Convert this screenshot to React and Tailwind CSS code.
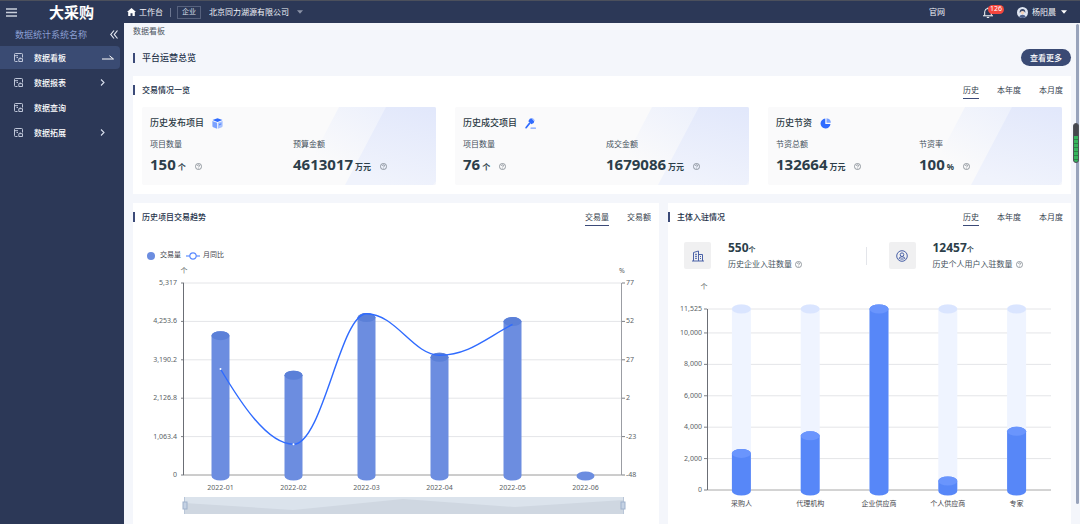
import React, { useState } from "react"

const MENU = [
  { label: "数据看板", active: true },
  { label: "数据报表", expandable: true },
  { label: "数据查询" },
  { label: "数据拓展", expandable: true },
]

const STATS = [
  {
    title: "历史发布项目",
    icon: "box",
    items: [
      { label: "项目数量", value: "150", unit: "个" },
      { label: "预算金额", value: "4613017", unit: "万元" },
    ],
  },
  {
    title: "历史成交项目",
    icon: "hammer",
    items: [
      { label: "项目数量", value: "76", unit: "个" },
      { label: "成交金额", value: "1679086", unit: "万元" },
    ],
  },
  {
    title: "历史节资",
    icon: "pie",
    items: [
      { label: "节资总额", value: "132664", unit: "万元" },
      { label: "节资率", value: "100", unit: "%" },
    ],
  },
]

const TREND = [
  { month: "2022-01", count: 3859, rate: 21 },
  { month: "2022-02", count: 2763, rate: -28 },
  { month: "2022-03", count: 4359, rate: 57 },
  { month: "2022-04", count: 3262, rate: 30 },
  { month: "2022-05", count: 4248, rate: 50 },
  { month: "2022-06", count: 0, rate: null },
]

const TREND_AXIS = [
  { left: "5,317", right: "77" },
  { left: "4,253.6", right: "52" },
  { left: "3,190.2", right: "27" },
  { left: "2,126.8", right: "2" },
  { left: "1,063.4", right: "-23" },
  { left: "0", right: "-48" },
]

const MEMBERS = [
  { name: "采购人", count: 2330 },
  { name: "代理机构", count: 3448 },
  { name: "企业供应商", count: 11525 },
  { name: "个人供应商", count: 575 },
  { name: "专家", count: 3735 },
]

const MEMBER_TICKS = [11525, 10000, 8000, 6000, 4000, 2000, 0]

const PERIODS = ["历史", "本年度", "本月度"]

function StatIcon({ type }) {
  if (type === "box") {
    return (
      <svg viewBox="0 0 22 22" className="size-[11px]">
        <path d="M11 0.5 21 4.2 11 8 1 4.2Z" fill="#2f6bff" />
        <path d="M0.8 6 10.2 9.4V21.4L2.4 18.4Q0.8 17.6 0.8 16Z" fill="#7ba2ff" />
        <path d="M21.2 6 11.8 9.4V21.4L19.6 18.4Q21.2 17.6 21.2 16Z" fill="#a5c0ff" />
        <path d="M14 12.2 18.6 10.4V13L14 14.8Z" fill="#5b8bff" />
      </svg>
    )
  }
  if (type === "hammer") {
    return (
      <svg viewBox="0 0 22 22" className="size-[11px]">
        <path d="M9.6 1.6 13 0.6 18.4 6.4 17.4 10 12.6 12.6 6.6 6.4Z" fill="#2f6bff" />
        <path d="M8.6 8.4 11 10.8 3.4 20.4Q1.8 21.6 0.8 20.4 0 19.2 1.2 18Z" fill="#2f6bff" />
        <path d="M13.4 0.6 15.4 0 19.6 4.4 18.6 6.6Z" fill="#9dbaff" />
        <rect x="11" y="19" width="11" height="2.4" rx="1" fill="#7ba2ff" />
      </svg>
    )
  }
  return (
    <svg viewBox="0 0 22 22" className="size-[11px]">
      <path d="M10.6 1.2A10 10 0 1 0 21 12H10.6Z" fill="#2f6bff" />
      <path d="M13 0.4A9.4 9.4 0 0 1 21.8 9.4H13Z" fill="#7ba2ff" />
    </svg>
  )
}

function HelpIcon() {
  return (
    <svg viewBox="0 0 16 16" className="size-[7px] shrink-0" fill="none" stroke="#5c6670" strokeWidth="1.4">
      <circle cx="8" cy="8" r="7" />
      <path d="M5.6 6.4C5.6 3.4 10.4 3.4 10.4 6.4 10.4 8 8 8 8 9.8M8 11.2V12.6" />
    </svg>
  )
}

function MenuIcon() {
  return (
    <svg viewBox="0 0 18 18" className="size-[9px] shrink-0" fill="none" stroke="#cfd6e6" strokeWidth="1.8">
      <path d="M17 9V2.8Q17 1 15.2 1H2.8Q1 1 1 2.8V15.2Q1 17 2.8 17H7" />
      <path d="M1 5.4H8M5 9H8" />
      <path d="M9.6 11.4H17V17H9.6ZM12.4 8.8V11.4" />
    </svg>
  )
}

function Caret({ color }) {
  return (
    <svg viewBox="0 0 10 6" className="h-[4px] w-[6px] shrink-0">
      <path d="M0 0H10L5 6Z" fill={color} />
    </svg>
  )
}

function SectionTitle({ children }) {
  return (
    <h3 className="flex items-center gap-[7px] text-[8px] font-medium text-[#24324a]">
      <span className="h-[10px] w-[2px] bg-[#3b4a78]" />
      {children}
    </h3>
  )
}

function Tabs({ items }) {
  const [active, setActive] = useState(items[0])
  return (
    <div className="flex gap-[18px] pr-2">
      {items.map((item) => (
        <button
          key={item}
          onClick={() => setActive(item)}
          className={`h-[18px] cursor-pointer border-b pt-px text-[8px] leading-[16px] text-[#36424e] ${
            active === item ? "border-[#3b4a78]" : "border-transparent"
          }`}
        >
          {item}
        </button>
      ))}
    </div>
  )
}

function TopBar() {
  return (
    <header className="flex h-[23px] items-center border-t border-[#4c505c] bg-[#2c3857] text-[8px] text-[#f1f3f8]">
      <div className="flex w-[124px] shrink-0 items-center gap-[32px] pl-[6px]">
        <button aria-label="菜单" className="cursor-pointer">
          <svg viewBox="0 0 11 9" className="h-[9px] w-[11px]" stroke="#c9cfdc" strokeWidth="1.4">
            <path d="M0 1H11M0 4.5H11M0 8H11" />
          </svg>
        </button>
        <span className="text-[15px] leading-none font-bold text-white">大采购</span>
      </div>
      <a href="#" className="flex items-center gap-[3px] pl-[3px]">
        <svg viewBox="0 0 18 16" className="h-[8px] w-[9px]">
          <path d="M9 0 18 8H15.6V16H11V10.4H7V16H2.4V8H0Z" fill="#fff" />
        </svg>
        工作台
      </a>
      <span className="ml-[7px] h-[9px] w-px bg-[#6c7690]" />
      <span className="ml-[6px] flex h-[13px] w-[24px] items-center justify-center border border-[#56617d] text-[7px] text-[#d5dae6]">
        企业
      </span>
      <label className="ml-2 flex items-center gap-[8px]">
        <select aria-label="企业名称" className="h-[14px] w-[80px] appearance-none bg-transparent text-[8px]">
          <option>北京同力湖源有限公司</option>
        </select>
        <Caret color="#8a92a6" />
      </label>
      <div className="ml-auto flex items-center pr-[13px]">
        <a href="#">官网</a>
        <button aria-label="消息" className="relative ml-[38px] cursor-pointer">
          <svg viewBox="0 0 20 22" className="h-[11px] w-[10px]" fill="none" stroke="#fff" strokeWidth="2">
            <path d="M0 17.6H20M3.4 17V9.6A6.6 6.6 0 0 1 16.6 9.6V17M10 1V3M7.6 20.8H12.4" />
          </svg>
          <span className="absolute -top-[2px] left-[5px] flex h-[9px] w-4 items-center justify-center rounded-full bg-[#f5453d] text-[7px] text-white">
            126
          </span>
        </button>
        <button className="ml-[24px] flex cursor-pointer items-center">
          <svg viewBox="0 0 22 22" className="size-[11px]">
            <circle cx="11" cy="11" r="11" fill="#dfe5f2" />
            <path d="M5.4 12Q4.6 4 11 4T16.6 12L14.6 9H8Z" fill="#3c4a6b" />
            <circle cx="11" cy="11.4" r="3.4" fill="#f3d3bd" />
            <path d="M4.4 19.8Q6 15.6 11 15.6T17.6 19.8Q11 24 4.4 19.8Z" fill="#4a5d8a" />
          </svg>
          <span className="mr-[5px] ml-1">杨阳晨</span>
          <Caret color="#fff" />
        </button>
      </div>
    </header>
  )
}

function Sidebar() {
  return (
    <aside className="w-[124px] shrink-0 bg-[#2c3857] text-[8px] text-white">
      <div className="flex h-[23px] items-center justify-between pr-[6px] pl-[15px]">
        <span className="text-[9px] text-[#8b9fd2]">数据统计系统名称</span>
        <button aria-label="收起" className="cursor-pointer">
          <svg viewBox="0 0 8 9" className="h-[9px] w-[8px]" fill="none" stroke="#e4e8f2" strokeWidth="1.2">
            <path d="M4 0.5 0.8 4.5 4 8.5M7.5 0.5 4.3 4.5 7.5 8.5" />
          </svg>
        </button>
      </div>
      <nav className="flex flex-col gap-[2px]">
        {MENU.map((item) => (
          <a
            key={item.label}
            href="#"
            className={`mr-1 flex h-[23px] items-center rounded-r-sm pl-[14px] font-medium ${
              item.active ? "bg-[#3a4b73]" : ""
            }`}
          >
            <MenuIcon />
            <span className="ml-[11px]">{item.label}</span>
            {item.active && (
              <svg viewBox="0 0 24 10" className="mr-[6px] ml-auto h-[5px] w-[12px]" fill="none" stroke="#fff" strokeWidth="2">
                <path d="M0 8H23L15 1.6" />
              </svg>
            )}
            {item.expandable && (
              <svg viewBox="0 0 5 7" className="mr-[15px] ml-auto h-[7px] w-[5px]" fill="none" stroke="#d8deec" strokeWidth="1.1">
                <path d="M1 0.5 4 3.5 1 6.5" />
              </svg>
            )}
          </a>
        ))}
      </nav>
    </aside>
  )
}

function StatCard({ stat, index }) {
  const fadeId = `fade-${index}`
  const sheenId = `sheen-${index}`
  return (
    <div className="relative overflow-hidden rounded-[2px] bg-[#fafafb] px-2 pt-2 pb-[13px]">
      <svg viewBox="0 0 120 78" className="absolute top-0 right-0 h-full w-[120px]">
        <defs>
          <linearGradient id={fadeId} x1="0.9" y1="0" x2="0.2" y2="0.8">
            <stop offset="0" stopColor="#e9eefc" />
            <stop offset="1" stopColor="#fafafb" />
          </linearGradient>
          <linearGradient id={sheenId} x1="0.8" y1="0" x2="0.5" y2="1">
            <stop offset="0" stopColor="#e2e8fb" />
            <stop offset="1" stopColor="#f0f3fc" />
          </linearGradient>
        </defs>
        <path d="M23 0H120V78H0V44Z" fill={`url(#${fadeId})`} />
        <path d="M70 0H120V74L117 78H29Z" fill={`url(#${sheenId})`} />
      </svg>
      <div className="relative">
        <h4 className="flex h-4 items-center gap-2 text-[9px] font-medium text-[#2c3a45]">
          {stat.title}
          <StatIcon type={stat.icon} />
        </h4>
        <dl className="mt-[7px] grid grid-cols-2 gap-2">
          {stat.items.map((item) => (
            <div key={item.label}>
              <dt className="text-[8px] leading-[12px] text-[#44515c]">{item.label}</dt>
              <dd className="mt-[6px] flex h-4 items-baseline text-[15px] leading-[16px] font-bold text-[#2c3e4a]">
                {item.value}
                <span className="mr-[9px] ml-[2px] text-[8px]">{item.unit}</span>
                <HelpIcon />
              </dd>
            </div>
          ))}
        </dl>
      </div>
    </div>
  )
}

// Bars share the same cylinder look: body with rounded base and a lid
function Cylinder({ x, top, base, radius, body, lid }) {
  return (
    <g>
      <path
        d={`M${x - radius} ${top}V${base}A${radius} 4.5 0 0 0 ${x + radius} ${base}V${top}A${radius} 4.5 0 0 0 ${x - radius} ${top}Z`}
        fill={body}
      />
      <ellipse cx={x} cy={top} rx={radius} ry="4.5" fill={lid} />
    </g>
  )
}

function TrendChart() {
  const left = 51
  const right = 489
  const top = 21
  const bottom = 213
  const step = (right - left) / TREND.length
  const xOf = (i) => left + step * (i + 0.5)
  const yOf = (v) => bottom - (v / 5317) * (bottom - top)
  const rateY = (v) => bottom - ((v + 48) / 125) * (bottom - top)

  const pts = TREND.filter((d) => d.rate !== null).map((d, i) => [xOf(i), rateY(d.rate)])
  const line = pts.reduce((path, [x, y], i) => {
    if (i === 0) return `M${x} ${y}`
    const [px, py] = pts[i - 1]
    const next = pts[i + 1]
    // flat tangents on the turning points, sloped at both ends
    const startY = i === 1 ? py + (y - py) * 0.44 : py
    const endY = next ? y : y + (py - y) * 0.44
    return `${path}C${px + step * (i === 1 ? 0.27 : 0.4)} ${startY} ${x - step * 0.36} ${endY} ${x} ${y}`
  }, "")

  return (
    <svg viewBox="0 0 526 256" className="block h-auto w-full text-[7px]" fill="#5a5f66">
      <text x={left} y="11" textAnchor="middle">个</text>
      <text x={right} y="11" textAnchor="middle">%</text>
      {TREND_AXIS.map((tick, i) => {
        const y = top + ((bottom - top) / 5) * i
        return (
          <g key={tick.left}>
            <path d={`M${left} ${y}H${right}`} stroke={i === 5 ? "#9a9a9a" : "#e4e5e8"} />
            <path d={`M${left - 3} ${y}H${left}M${right} ${y}h3`} stroke="#7d8086" />
            <text x={left - 7} y={y + 2} textAnchor="end">{tick.left}</text>
            <text x={right + 4} y={y + 2}>{tick.right}</text>
          </g>
        )
      })}
      <path d={`M${left - 0.5} ${top}V${bottom}`} stroke="#6b6e75" />
      <path d={`M${right - 0.5} ${top}V${bottom}`} stroke="#9b9da3" />
      {TREND.map((d, i) => (
        <g key={d.month}>
          {d.count > 0 ? (
            <Cylinder x={xOf(i)} top={yOf(d.count)} base={bottom + 1} radius={9} body="#6c8de0" lid="#5b80d8" />
          ) : (
            <ellipse cx={xOf(i)} cy={bottom + 1} rx="9" ry="4.5" fill="#6c8de0" />
          )}
          <text x={xOf(i)} y="228" textAnchor="middle">{d.month}</text>
        </g>
      ))}
      <path d={line} fill="none" stroke="#2f6bff" strokeWidth="1.4" />
      {pts.slice(0, 2).map(([x, y]) => (
        <circle key={x} cx={x} cy={y} r="1" fill="#fff" />
      ))}
      <rect x={left} y="235" width="440" height="17" fill="#dbe3ec" />
      <path d="M51 241 160 248 270 237 382 245 491 238V252H51Z" fill="#cfd7e1" />
      <path d="M51.5 235V252M490.5 235V252" stroke="#b9c6d8" />
      <rect x="50" y="240" width="4" height="7" fill="#c5d2e4" stroke="#9fb2cc" />
      <rect x="488" y="240" width="4" height="7" fill="#c5d2e4" stroke="#9fb2cc" />
    </svg>
  )
}

function MemberChart() {
  const left = 39
  const right = 383
  const top = 29
  const bottom = 210
  const step = (right - left) / MEMBERS.length
  const yOf = (v) => bottom - (v / 11525) * (bottom - top)

  return (
    <svg viewBox="0 0 403 240" className="block h-auto w-full text-[7px]" fill="#5a5f66">
      <text x="36" y="9" textAnchor="middle">个</text>
      {MEMBER_TICKS.map((tick) => (
        <g key={tick}>
          <path d={`M${left} ${yOf(tick)}H${right}`} stroke={tick === 0 ? "#a8a8a8" : "#e4e5e8"} />
          <path d={`M${left - 3} ${yOf(tick)}H${left}`} stroke="#7d8086" />
          <text x={left - 5} y={yOf(tick) + 2} textAnchor="end">{tick.toLocaleString("en-US")}</text>
        </g>
      ))}
      <path d={`M${left + 0.5} ${top}V${bottom}`} stroke="#6b6e75" />
      {MEMBERS.map((d, i) => {
        const x = left + step * (i + 0.5)
        return (
          <g key={d.name}>
            <Cylinder x={x} top={top} base={bottom} radius={9.5} body="#eff4ff" lid="#dae5ff" />
            <Cylinder x={x} top={yOf(d.count)} base={bottom + 1} radius={9.5} body="#5787f8" lid="#6a95fd" />
            <text x={x} y="226" textAnchor="middle" fill="#3f444b">{d.name}</text>
          </g>
        )
      })}
    </svg>
  )
}

function MemberStat({ icon, value, label }) {
  return (
    <div className="flex items-center gap-[17px]">
      <div className="flex size-[27px] shrink-0 items-center justify-center rounded-[2px] bg-[#f0f0f1]">
        {icon}
      </div>
      <div>
        <p className="text-[12px] leading-[15px] font-bold text-[#2c3e4a]">
          {value}
          <span className="text-[7px]">个</span>
        </p>
        <p className="flex items-center gap-[3px] text-[8px] leading-[14px] whitespace-nowrap text-[#44515c]">
          {label}
          <HelpIcon />
        </p>
      </div>
    </div>
  )
}

export default function App() {
  return (
    <div className="relative flex min-h-screen flex-col bg-[#f4f6fb] font-['Noto_Sans','Noto_Sans_CJK_SC',sans-serif]">
      <TopBar />
      <div className="flex flex-1">
        <Sidebar />
        <main className="flex min-w-0 flex-1 flex-col px-[9px]">
          <p className="h-4 text-[8px] leading-[16px] text-[#4c5560]">数据看板</p>

          <div className="mt-[10px] flex items-center justify-between">
            <h2 className="flex items-center gap-[7px] text-[9px] font-medium text-[#24324a]">
              <span className="h-[10px] w-[2px] bg-[#3b4a78]" />
              平台运营总览
            </h2>
            <button className="h-[17px] cursor-pointer rounded-full bg-[#3a4a74] px-[9px] text-[8px] font-medium text-white">
              查看更多
            </button>
          </div>

          {/* 交易情况 */}
          <section className="mt-[10px] bg-white pb-[9px]">
            <div className="flex h-7 items-center justify-between">
              <SectionTitle>交易情况一览</SectionTitle>
              <Tabs items={PERIODS} />
            </div>
            <div className="mt-[3px] grid grid-cols-3 gap-[19px] px-[9px]">
              {STATS.map((stat, i) => (
                <StatCard key={stat.title} stat={stat} index={i} />
              ))}
            </div>
          </section>

          <div className="mt-[9px] grid flex-1 grid-cols-[526fr_403fr] gap-[9px]">
            {/* 交易趋势 */}
            <section className="bg-white">
              <div className="flex h-7 items-center justify-between">
                <SectionTitle>历史项目交易趋势</SectionTitle>
                <Tabs items={["交易量", "交易额"]} />
              </div>
              <div className="mt-[18px] flex h-[13px] items-center pl-[14px] text-[7px] text-[#3f444b]">
                <span className="size-2 rounded-full bg-[#6c8de0]" />
                <span className="ml-[5px]">交易量</span>
                <svg viewBox="0 0 14 8" className="mr-[3px] ml-[5px] h-2 w-[14px]" fill="#fff" stroke="#5b8bff" strokeWidth="1.2">
                  <path d="M0 4H14" />
                  <circle cx="7" cy="4" r="3.2" />
                </svg>
                <span>月同比</span>
              </div>
              <TrendChart />
            </section>

            {/* 主体入驻 */}
            <section className="bg-white">
              <div className="flex h-7 items-center justify-between">
                <SectionTitle>主体入驻情况</SectionTitle>
                <Tabs items={PERIODS} />
              </div>
              <div className="mt-[9px] mb-[11px] grid h-[29px] grid-cols-2 items-center pr-6 pl-4">
                <MemberStat
                  value="550"
                  label="历史企业入驻数量"
                  icon={
                    <svg viewBox="0 0 24 24" className="size-3" fill="none" stroke="#4a62a8" strokeWidth="2">
                      <path d="M0 22H24M3 22V5L13 2V22M13 9H21V22M6 8.6H10M6 12.6H10M6 16.6H10M16 13H18M16 17H18" />
                    </svg>
                  }
                />
                <div className="flex items-center gap-[22px]">
                  <span className="h-[18px] w-px bg-[#e3e5ea]" />
                  <MemberStat
                    value="12457"
                    label="历史个人用户入驻数量"
                    icon={
                      <svg viewBox="0 0 24 24" className="size-3" fill="none" stroke="#4a62a8" strokeWidth="2">
                        <circle cx="12" cy="12" r="10.6" />
                        <circle cx="12" cy="9.4" r="3.6" />
                        <path d="M6 18.4Q6 13.4 12 13.4T18 18.4M8.6 18H15.4" />
                      </svg>
                    }
                  />
                </div>
              </div>
              <MemberChart />
            </section>
          </div>
        </main>
      </div>

      {/* scroll track thumb and the level meter over it */}
      <div className="absolute top-6 right-px bottom-5 w-[3px] rounded-full bg-[#98a3bb]" />
      <div className="absolute top-[123px] right-px h-10 w-[6px] overflow-hidden rounded-full border border-[#505258] bg-[#45474d] pt-3">
        <div className="h-full bg-[repeating-linear-gradient(#35b45c_0px,#35b45c_3px,#2a8046_3px,#2a8046_4px)]" />
      </div>
    </div>
  )
}
